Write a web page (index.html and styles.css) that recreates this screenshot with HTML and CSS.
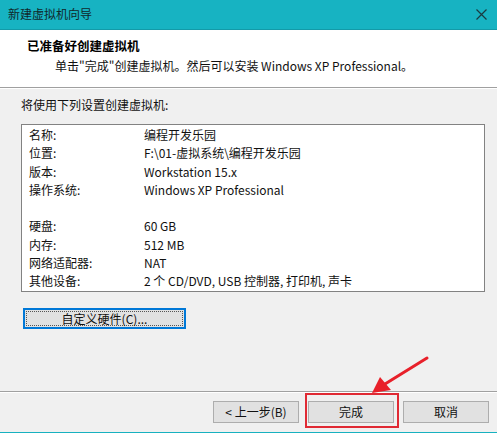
FILE: index.html
```html
<!DOCTYPE html>
<html lang="zh-CN">
<head>
<meta charset="utf-8">
<title>新建虚拟机向导</title>
<link rel="stylesheet" href="styles.css">
</head>
<body>
<div class="window">
  <div class="titlebar">
    <span class="title">新建虚拟机向导</span>
    <svg class="close" width="11" height="11" viewBox="0 0 11 11"><path d="M0.5 0.5 L10.5 10.5 M10.5 0.5 L0.5 10.5" stroke="#1a3a40" stroke-width="1.2" fill="none"/></svg>
  </div>
  <div class="header">
    <div class="h-title">已准备好创建虚拟机</div>
    <div class="h-sub">单击"完成"创建虚拟机。然后可以安装 Windows XP Professional。</div>
  </div>
  <div class="content">
    <div class="intro">将使用下列设置创建虚拟机:</div>
    <div class="listbox">
      <div class="row"><span class="k">名称:</span><span class="v">编程开发乐园</span></div>
      <div class="row"><span class="k">位置:</span><span class="v">F:\01-虚拟系统\编程开发乐园</span></div>
      <div class="row"><span class="k">版本:</span><span class="v">Workstation 15.x</span></div>
      <div class="row"><span class="k">操作系统:</span><span class="v">Windows XP Professional</span></div>
      <div class="row"></div>
      <div class="row"><span class="k">硬盘:</span><span class="v">60 GB</span></div>
      <div class="row"><span class="k">内存:</span><span class="v">512 MB</span></div>
      <div class="row"><span class="k">网络适配器:</span><span class="v">NAT</span></div>
      <div class="row"><span class="k">其他设备:</span><span class="v">2 个 CD/DVD, USB 控制器, 打印机, 声卡</span></div>
    </div>
    <button class="btn custom"><span class="focus">自定义硬件(C)...</span></button>
  </div>
  <div class="footer">
    <button class="btn">&lt; 上一步(B)</button>
    <button class="btn">完成</button>
    <button class="btn">取消</button>
  </div>
  <div class="highlight"></div>
  <svg class="arrow" width="70" height="50" viewBox="0 0 70 50">
    <path d="M62 4 L20 30" stroke="#e8202a" stroke-width="3" stroke-linecap="round" fill="none"/>
    <path d="M7 39 L15 23 L26 36 Z" fill="#e8202a"/>
  </svg>
</div>
</body>
</html>
```
FILE: styles.css
```css
* { box-sizing: border-box; }
html, body { margin: 0; padding: 0; }
body {
  width: 497px;
  height: 433px;
  overflow: hidden;
  background: #f0f0f0;
  font-family: "Noto Sans CJK SC", "Noto Sans", sans-serif;
  font-size: 12px;
  color: #111;
}
.window {
  position: relative;
  width: 497px;
  height: 433px;
  display: flex;
  flex-direction: column;
  border-bottom: 1px solid #17b1c0;
}
.titlebar {
  height: 30px;
  background: #17b3c2;
  border-bottom: 1px solid #139aa8;
  display: flex;
  align-items: center;
  justify-content: space-between;
  padding: 0 10px 1px 8px;
  flex: none;
}
.title { line-height: 16px; color: #10282b; }
.close { display: block; }
.header {
  background: #fff;
  height: 58px;
  flex: none;
  border-bottom: 1px solid #a0a0a0;
  box-shadow: 0 1px 0 #fff;
  padding: 7px 0 0 27px;
}
.h-title { font-weight: bold; font-size: 12.5px; line-height: 18px; color: #000; }
.h-sub { padding-left: 28px; line-height: 18px; margin-top: 2px; }
.content {
  flex: 1;
  padding: 8px 12px 0 21px;
  display: flex;
  flex-direction: column;
  align-items: flex-start;
}
.intro { line-height: 16px; margin-top: 1px; }
.listbox {
  margin-top: 11px;
  width: 464px;
  height: 168px;
  background: #fff;
  border: 1px solid #828282;
  padding: 1px 0 0 7px;
}
.row { display: flex; height: 18.3px; line-height: 18.3px; }
.k { width: 115px; flex: none; }
.btn {
  font-family: inherit;
  font-size: 12px;
  color: #111;
  background: #e1e1e1;
  border: 1px solid #adadad;
  height: 22px;
  width: 86px;
  padding: 0;
  line-height: 18px;
  margin: 0;
}
.custom {
  margin-top: 16px;
  margin-left: 2px;
  width: 163px;
  height: 21px;
  border: 2px solid #0078d7;
  padding: 1px;
  display: flex;
}
.focus {
  flex: 1;
  border: 1px dotted #555;
  line-height: 13px;
  text-align: center;
}
.footer {
  flex: none;
  height: 41px;
  border-top: 1px solid #a0a0a0;
  box-shadow: inset 0 1px 0 #fff;
  display: flex;
  justify-content: flex-end;
  gap: 9px;
  padding: 9px 8px 0 0;
}
.highlight {
  position: absolute;
  left: 305px;
  top: 393px;
  width: 94px;
  height: 35px;
  border: 2px solid #e02a34;
}
.arrow {
  position: absolute;
  left: 365px;
  top: 354px;
}
```
